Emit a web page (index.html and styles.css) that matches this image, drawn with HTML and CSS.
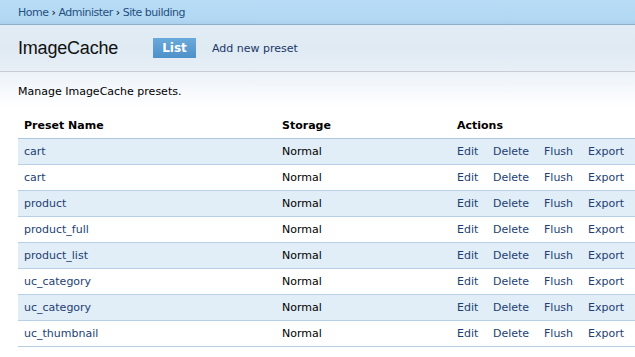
FILE: index.html
```html
<!DOCTYPE html>
<html lang="en">
<head>
    <meta charset="UTF-8">
    <link rel="stylesheet" href="styles.css">
    <title>ImageCache</title>
</head>
<body>
    <div class="breadcrumb">
        <a href="#">Home</a> › <a href="#">Administer</a> › <a href="#">Site building</a>
    </div>
    <div class="header">
        <h1>ImageCache</h1>
        <ul class="tabs">
            <li class="active"><a href="#">List</a></li>
            <li><a href="#">Add new preset</a></li>
        </ul>
    </div>
    <div class="content">
        <p class="help">Manage ImageCache presets.</p>
        <table class="presets">
            <colgroup>
                <col class="c-name">
                <col class="c-storage">
                <col class="c-edit">
                <col class="c-delete">
                <col class="c-flush">
                <col class="c-export">
            </colgroup>
            <thead>
                <tr>
                    <th>Preset Name</th>
                    <th>Storage</th>
                    <th colspan="4">Actions</th>
                </tr>
            </thead>
            <tbody id="rows"></tbody>
        </table>
    </div>

    <script>
        const presets = ["cart", "cart", "product", "product_full", "product_list", "uc_category", "uc_category", "uc_thumbnail"];
        const rows = document.querySelector("#rows");
        presets.forEach((name, i) => {
            let tr = document.createElement("tr");
            tr.className = i % 2 == 0 ? "odd" : "even";
            tr.innerHTML = `<td><a href="#">${name}</a></td>
                <td>Normal</td>
                <td><a href="#">Edit</a></td>
                <td><a href="#">Delete</a></td>
                <td><a href="#">Flush</a></td>
                <td><a href="#">Export</a></td>`;
            rows.appendChild(tr);
        });
    </script>
</body>
</html>
```

FILE: styles.css
```css
* {
    padding: 0;
    margin: 0;
    box-sizing: border-box;
}
body {
    font-family: "DejaVu Sans", Verdana, sans-serif;
    font-size: 11px;
    color: #000;
    background: #fff;
    overflow: hidden;
}
a {
    color: #1d3f72;
    text-decoration: none;
}
.breadcrumb {
    height: 25px;
    padding: 6px 18px 0;
    background: linear-gradient(#b8dcf6, #b3d8f3 80%, #a9d0ee);
    border-bottom: 1px solid #8eaecb;
    letter-spacing: -0.5px;
}
.breadcrumb a {
    color: #24507f;
}
.header {
    height: 47px;
    display: flex;
    align-items: center;
    padding: 0 18px;
    background: linear-gradient(#e2ecf4, #dfeaf3 50%, #e8eff6);
    border-bottom: 1px solid #c6cdd6;
}
.header h1 {
    font-family: "Liberation Sans", Arial, sans-serif;
    font-weight: normal;
    font-size: 18px;
    letter-spacing: -0.2px;
    color: #111;
    width: 135px;
}
.tabs {
    list-style: none;
    display: flex;
    align-items: center;
    gap: 16px;
}
.tabs li a {
    display: block;
    font-size: 11px;
    color: #1a3768;
}
.tabs li.active a {
    width: 43px;
    height: 20px;
    line-height: 20px;
    text-align: center;
    font-weight: bold;
    font-size: 12px;
    color: #fff;
    background: linear-gradient(#6aa9da, #4e90c9);
}
.content {
    padding: 13px 0 0 18px;
    background: linear-gradient(#ecf2f9, #fff 35px);
}
.help {
    height: 27px;
}
.presets {
    border-collapse: collapse;
    table-layout: fixed;
    width: 617px;
}
.c-name { width: 258px; }
.c-storage { width: 175px; }
.c-edit { width: 36px; }
.c-delete { width: 51px; }
.c-flush { width: 44px; }
.c-export { width: 53px; }
.presets th {
    text-align: left;
    font-weight: bold;
    height: 26px;
    padding: 1px 0 0 6px;
    border-bottom: 1px solid #a9c7e0;
}
.presets td {
    height: 26px;
    padding: 1px 0 0 6px;
    border-bottom: 1px solid #b7d0e6;
    white-space: nowrap;
}
.presets tr.odd td {
    background: #e1edf7;
}
.presets tr.even td {
    background: #fff;
}
```
